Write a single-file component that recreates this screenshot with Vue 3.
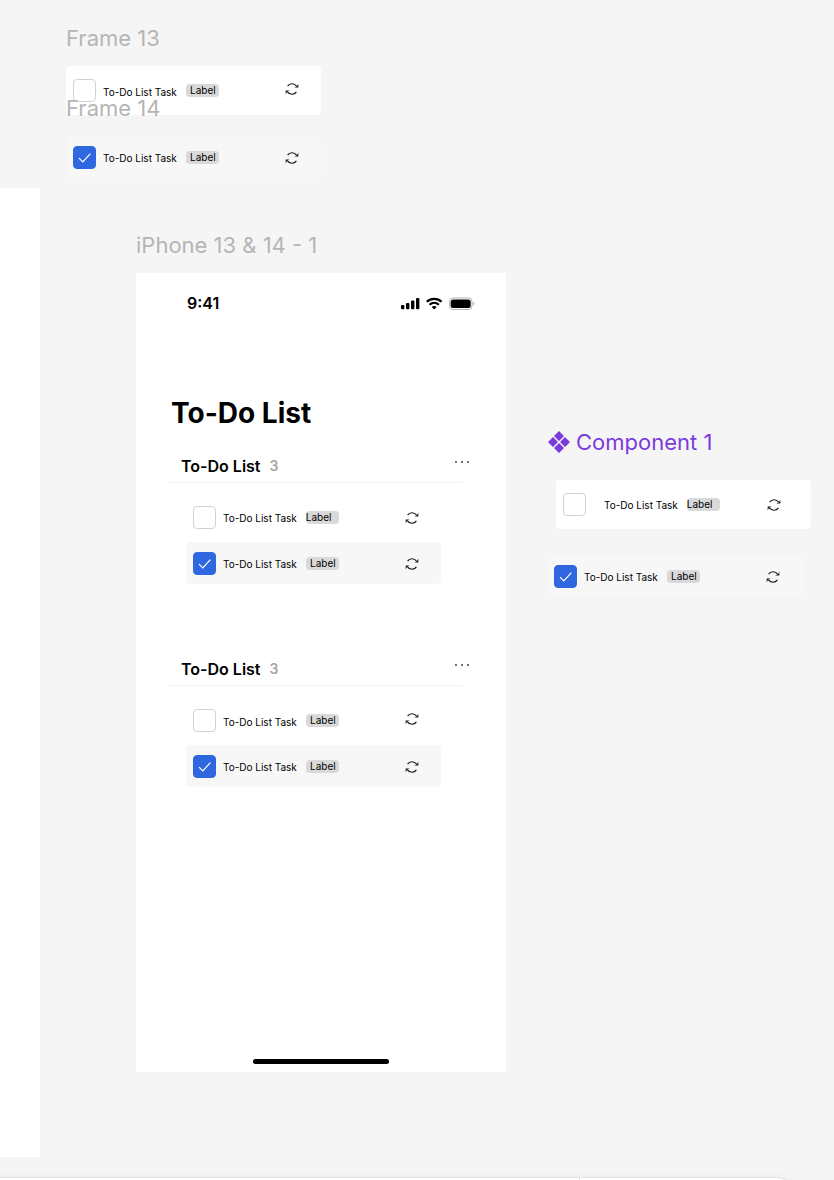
<script setup>
import { h, reactive } from 'vue'

const tasks = reactive({
  open: { done: false, raised: true },
  done: { done: true },
  main1: { done: false, flush: true },
  main2: { done: true },
  main3: { done: false, raised: true },
  main4: { done: true },
  comp1: { done: false, flush: true, wide: true },
  comp2: { done: true }
})

const sections = [
  { id: 's1', title: 'To-Do List', count: 3, tasks: ['main1', 'main2'] },
  { id: 's2', title: 'To-Do List', count: 3, tasks: ['main3', 'main4'] }
]

const TaskRow = (props) => {
  const t = tasks[props.id]
  return h('div', { class: ['task', { done: t.done, raised: t.raised, flush: t.flush, wide: t.wide }] }, [
    h('span', { class: 'box' }, [
      h('input', {
        type: 'checkbox',
        id: props.id,
        checked: t.done,
        onChange: (e) => { t.done = e.target.checked }
      }),
      t.done
        ? h('svg', { class: 'tick', viewBox: '0 0 23 23', 'aria-hidden': 'true' }, [
            h('path', { d: 'M6 12.2 9.8 16 17.4 7.6' })
          ])
        : null
    ]),
    h('label', { class: 'name', for: props.id }, 'To-Do List Task'),
    h('span', { class: 'tag' }, 'Label'),
    h('button', { class: 'sync', type: 'button', 'aria-label': 'Repeat task' }, [
      h('svg', { viewBox: '0 0 14 14', 'aria-hidden': 'true' }, [
        h('path', { d: 'M2.6 4.1C4.6 1 9.4 .8 11.7 4.4M11.4 9.9C9.4 13 4.6 13.2 2.3 9.6' }),
        h('path', { class: 'head', d: 'M13.3 1.4V5.4H9.4L12 4.2ZM.7 12.6V8.6H4.6L2 9.8Z' })
      ])
    ])
  ])
}
TaskRow.props = ['id']
</script>

<template>
  <main class="canvas">
    <div class="side-board"></div>

    <section class="board frame-13">
      <h2 class="board-name">Frame 13</h2>
      <TaskRow id="open" />
    </section>

    <section class="board frame-14">
      <h2 class="board-name">Frame 14</h2>
      <TaskRow id="done" />
    </section>

    <section class="board phone-board">
      <h2 class="board-name">iPhone 13 &amp; 14 - 1</h2>
      <div class="phone">
        <header class="status">
          <time class="clock">9:41</time>
          <svg class="status-icons" viewBox="0 0 74 14" aria-hidden="true">
            <rect x="0" y="9" width="3.4" height="4.200" rx="1" />
            <rect x="5" y="7" width="3.4" height="6.200" rx="1" />
            <rect x="10" y="4.500" width="3.4" height="8.700" rx="1" />
            <rect x="15" y="2" width="3.4" height="11.200" rx="1" />
            <g class="wifi">
              <path d="M25.800 5.800C30 1.900 36.400 1.900 40.600 5.800" />
              <path d="M28.500 8.800C31.300 6.300 35.100 6.300 37.900 8.800" />
            </g>
            <path d="M33.200 13.400 30.700 10.900C32.100 9.600 34.300 9.600 35.700 10.900Z" />
            <rect class="case" x="48.500" y="2" width="22.500" height="11.500" rx="3.500" />
            <path class="nub" d="M72 5.800C73.800 6.400 73.800 8.900 72 9.500Z" />
            <rect x="49.700" y="3.500" width="20" height="8.500" rx="2.500" />
          </svg>
        </header>
        <h1 class="title">To-Do List</h1>
        <section v-for="s in sections" :key="s.id" class="list">
          <header class="list-head">
            <h3 class="list-name">{{ s.title }}</h3>
            <span class="count">{{ s.count }}</span>
            <button class="more" type="button" aria-label="More options">
              <svg viewBox="0 0 16 4" aria-hidden="true">
                <circle cx="2" cy="2" r="1" />
                <circle cx="8" cy="2" r="1" />
                <circle cx="14" cy="2" r="1" />
              </svg>
            </button>
          </header>
          <hr class="rule" />
          <div class="rows">
            <TaskRow v-for="id in s.tasks" :id="id" :key="id" />
          </div>
        </section>
        <div class="home"></div>
      </div>
    </section>

    <section class="board component-board">
      <h2 class="board-name component-name">
        <svg viewBox="0 0 22 22" aria-hidden="true">
          <path d="M11 0 16 5 11 10 6 5ZM11 12 16 17 11 22 6 17ZM5 6 10 11 5 16 0 11ZM17 6 22 11 17 16 12 11Z" />
        </svg>
        Component 1
      </h2>
      <div class="variants">
        <TaskRow id="comp1" />
        <TaskRow id="comp2" />
      </div>
    </section>

    <div class="dock">
      <div class="dock-main"></div>
      <div class="dock-side"></div>
    </div>
  </main>
</template>

<style>
body {
  background: #f5f5f5;
}
</style>

<style scoped>
.canvas {
  position: relative;
  height: 100vh;
  overflow: hidden;
  background: #f5f5f5;
  color: #000;
  font-family: Inter, "Liberation Sans", sans-serif;
}
.canvas :deep(*) {
  box-sizing: border-box;
}
.side-board {
  position: absolute;
  left: 0;
  top: 188px;
  width: 40px;
  height: 969px;
  background: #fff;
}
.board {
  position: absolute;
  display: flex;
  flex-direction: column;
  gap: 14px;
}
.frame-13 { left: 66px; top: 24px; }
.frame-14 { left: 66px; top: 94px; }
.phone-board { left: 136px; top: 231px; }
.component-board { left: 547px; top: 428px; }
.board-name {
  margin: 0;
  font-size: 22px;
  line-height: 28px;
  font-weight: 400;
  color: #b5b5b5;
  white-space: nowrap;
}
.component-name {
  display: flex;
  align-items: center;
  gap: 6px;
  padding-left: 1px;
  color: #7b3bdc;
}
.component-name svg {
  width: 22px;
  height: 22px;
  fill: currentColor;
}
.variants {
  display: flex;
  flex-direction: column;
  gap: 26px;
  padding-top: 10px;
}

.canvas :deep(.task) {
  display: flex;
  align-items: center;
  width: 255px;
  height: 49px;
  padding: 0 22px 0 7px;
  border-radius: 4px;
  background: #fff;
}
.canvas :deep(.task.done) {
  height: 42px;
  background: #f7f7f7;
}
.canvas :deep(.task.wide) {
  margin-left: 9px;
  padding-right: 30px;
}
.canvas :deep(.box) {
  display: grid;
  flex: none;
  width: 23px;
  height: 23px;
}
.canvas :deep(.box input) {
  grid-area: 1 / 1;
  appearance: none;
  width: 23px;
  height: 23px;
  margin: 0;
  border: 1px solid #d2d2d2;
  border-radius: 4px;
  background: #fff;
}
.canvas :deep(.box input:checked) {
  border-color: #2f67e0;
  background: #2f67e0;
}
.canvas :deep(.tick) {
  grid-area: 1 / 1;
  width: 23px;
  height: 23px;
  fill: none;
  stroke: #fff;
  stroke-width: 1.2;
  pointer-events: none;
}
.canvas :deep(.name) {
  margin-left: 7px;
  padding-top: 2px;
  font-size: 10px;
  line-height: 14px;
  white-space: nowrap;
}
.canvas :deep(.flush .name) {
  padding-top: 0;
}
.canvas :deep(.wide .name) {
  margin-left: 18px;
}
.canvas :deep(.tag) {
  width: 33px;
  height: 13px;
  margin-left: 9px;
  padding-left: 1px;
  border-radius: 4px;
  background: #d9d9d9;
  font-size: 10px;
  line-height: 13px;
  text-align: center;
}
.canvas :deep(.flush .tag) {
  padding-left: 0;
  text-align: left;
}
.canvas :deep(.sync) {
  display: flex;
  margin-left: auto;
  padding: 0;
  border: 0;
  background: none;
}
.canvas :deep(.raised .sync) {
  padding-bottom: 4px;
}
.canvas :deep(.done .sync) {
  padding-top: 2px;
}
.canvas :deep(.sync svg) {
  width: 14px;
  height: 14px;
  fill: none;
  stroke: #111;
  stroke-width: 1.1;
}
.canvas :deep(.sync .head) {
  fill: #111;
  stroke: none;
}

.phone {
  display: flex;
  flex-direction: column;
  width: 370px;
  min-height: 799px;
  padding: 0 31px 8px;
  background: #fff;
}
.status {
  display: flex;
  align-items: center;
  justify-content: space-between;
  height: 60px;
  margin-bottom: 64px;
  padding-left: 20px;
}
.clock {
  font-size: 16px;
  line-height: 20px;
  font-weight: 600;
}
.status-icons {
  width: 74px;
  height: 14px;
}
.wifi {
  fill: none;
  stroke: #000;
  stroke-width: 2.200;
}
.case {
  fill: #fff;
  stroke: #b5b5b5;
  stroke-width: 1;
}
.nub {
  fill: #b5b5b5;
}
.title {
  margin: 0 4px 23px;
  font-size: 28px;
  line-height: 32px;
  font-weight: 700;
}
.list {
  display: flex;
  flex-direction: column;
  height: 203px;
}
.list-head {
  display: flex;
  align-items: center;
  height: 30px;
  padding: 0 5px 2px 14px;
}
.list-name {
  margin: 0 9px 0 0;
  font-size: 16px;
  line-height: 20px;
  font-weight: 600;
}
.count {
  font-size: 14px;
  line-height: 20px;
  font-weight: 600;
  color: #a6a6a6;
}
.more {
  display: flex;
  margin-left: auto;
  padding: 0 0 8px;
  border: 0;
  background: none;
}
.more svg {
  width: 16px;
  height: 4px;
  fill: #444;
}
.rule {
  width: auto;
  height: 1px;
  margin: 0 12px 0 1px;
  border: 0;
  background: #f2f2f2;
}
.rows {
  padding: 10px 0 0 19px;
}
.home {
  width: 136px;
  height: 5px;
  margin: auto auto 0;
  border-radius: 3px;
  background: #000;
}
.dock {
  position: absolute;
  left: -20px;
  right: 38px;
  top: 1178px;
  display: flex;
  gap: 1px;
  height: 48px;
  border-radius: 20px;
  overflow: hidden;
  background: #e2e2e2;
  box-shadow: 0 0 0 1px #e6e6e6, 0 1px 10px rgba(0, 0, 0, 0.08);
}
.dock-main {
  width: 599px;
  background: #fff;
}
.dock-side {
  flex: 1;
  background: #fff;
}
</style>
